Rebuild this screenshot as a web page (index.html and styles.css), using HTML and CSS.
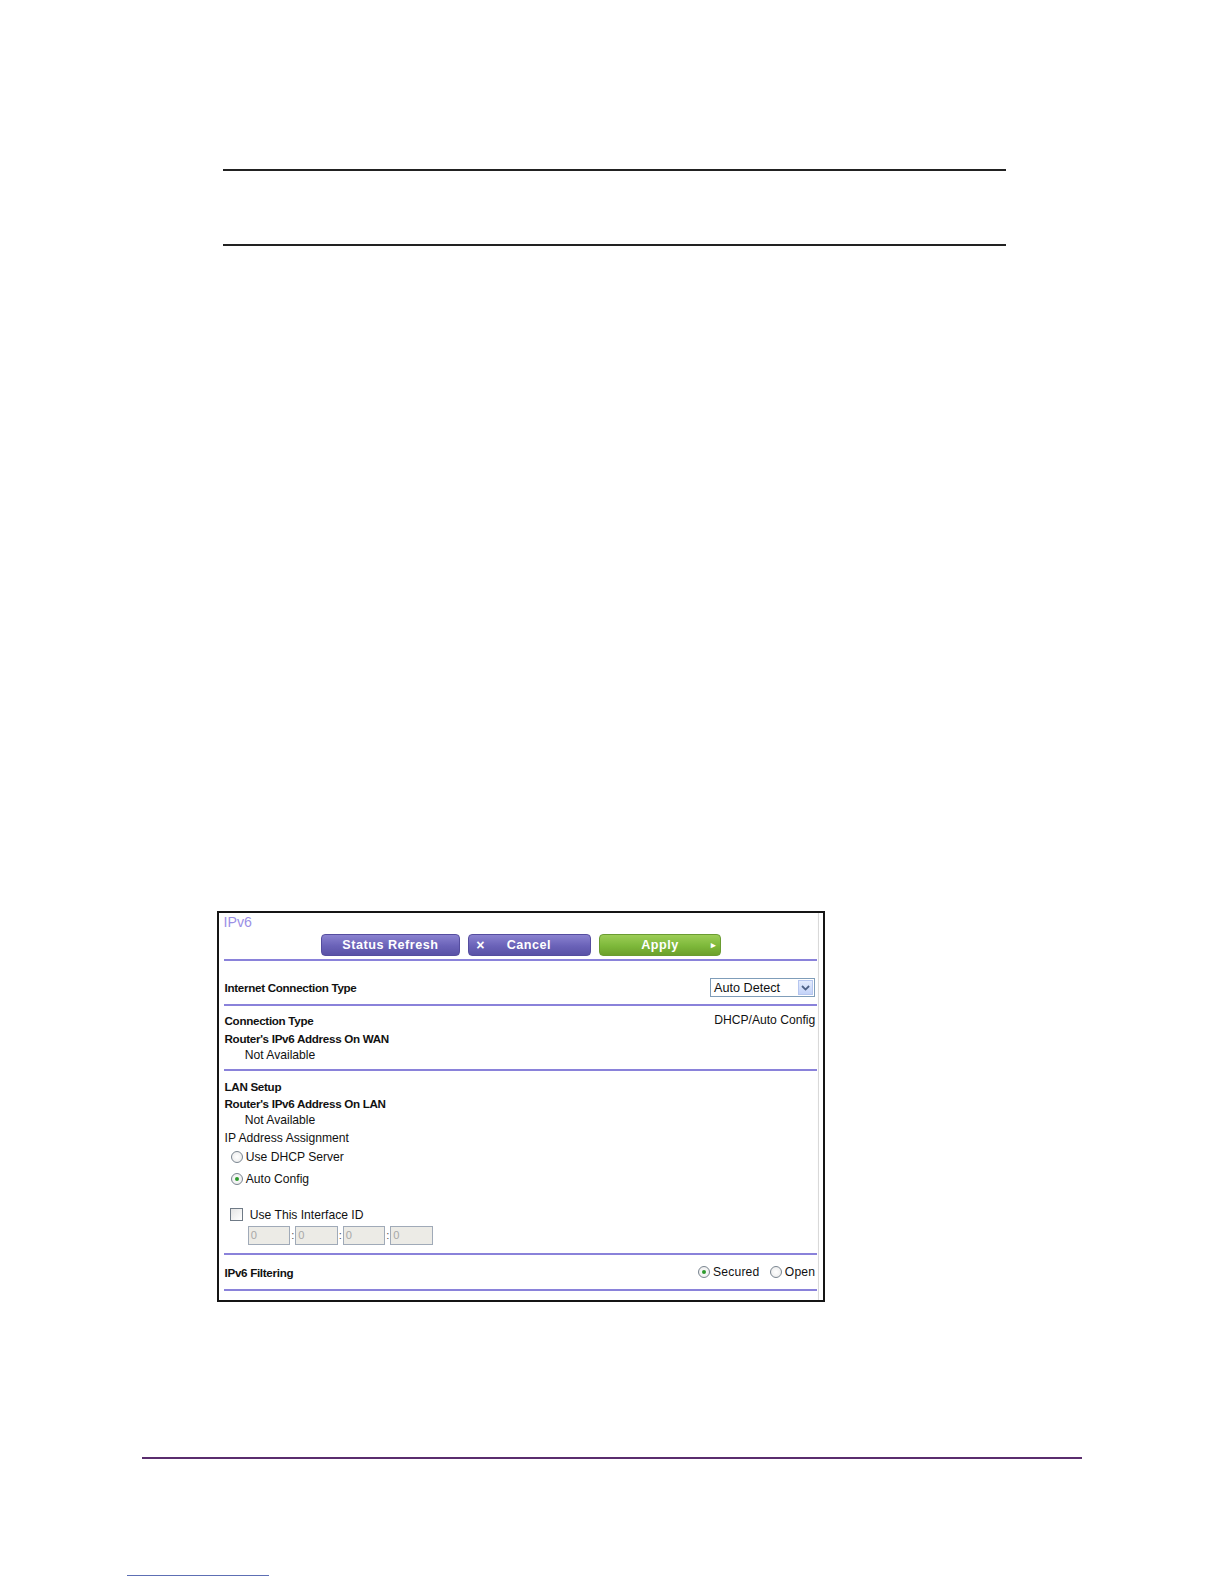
FILE: index.html
```html
<!DOCTYPE html>
<html>
<head>
<meta charset="utf-8">
<link rel="stylesheet" href="styles.css">
</head>
<body>
<div class="page">
  <div class="note-box"></div>

  <div class="panel">
    <div class="title">IPv6</div>
    <div class="btn-row">
      <span class="btn btn-purple btn-refresh">Status Refresh</span>
      <span class="btn btn-purple btn-cancel"><span class="x">×</span><span class="lbl">Cancel</span></span>
      <span class="btn btn-green btn-apply"><span class="lbl">Apply</span><span class="arr">▸</span></span>
    </div>
    <div class="hr"></div>

    <div class="sec sec-ict">
      <div class="row-between">
        <span class="b">Internet Connection Type</span>
        <span class="select"><span class="sel-text">Auto Detect</span><span class="sel-btn"><svg width="9" height="6" viewBox="0 0 9 6"><path d="M1 1 L4.5 4.5 L8 1" fill="none" stroke="#4d6185" stroke-width="1.8"/></svg></span></span>
      </div>
    </div>
    <div class="hr"></div>

    <div class="sec sec-wan">
      <div class="line row-between"><span class="b">Connection Type</span><span>DHCP/Auto Config</span></div>
      <div class="line b">Router's IPv6 Address On WAN</div>
      <div class="line ind">Not Available</div>
    </div>
    <div class="hr"></div>

    <div class="sec sec-lan">
      <div class="line b">LAN Setup</div>
      <div class="line b">Router's IPv6 Address On LAN</div>
      <div class="line ind">Not Available</div>
      <div class="line">IP Address Assignment</div>
      <div class="radio-line"><span class="radio"></span>Use DHCP Server</div>
      <div class="radio-line"><span class="radio on"></span>Auto Config</div>
      <div class="check-line"><span class="check"></span>Use This Interface ID</div>
      <div class="ids">
        <span class="inp">0</span><span class="colon">:</span><span class="inp">0</span><span class="colon">:</span><span class="inp">0</span><span class="colon">:</span><span class="inp">0</span>
      </div>
    </div>
    <div class="hr"></div>

    <div class="sec sec-filter">
      <div class="row-between">
        <span class="b">IPv6 Filtering</span>
        <span class="opts"><span class="radio on"></span><span class="opt-l">Secured</span><span class="radio"></span><span class="opt-l">Open</span></span>
      </div>
    </div>
    <div class="hr"></div>
  </div>

  <div class="footer-rule"></div>
  <div class="tiny-rule"></div>
</div>
</body>
</html>
```

FILE: styles.css
```css
html, body {
  margin: 0;
  padding: 0;
  background: #fff;
}
.page {
  zoom: 1.0115;
  padding-top: 1px;
  font-family: "Liberation Sans", Arial, sans-serif;
  color: #111;
}
.note-box {
  margin: 166px 0 0 220px;
  width: 775px;
  height: 72px;
  border-top: 2px solid #222;
  border-bottom: 2px solid #222;
}
.panel {
  margin: 658px 0 0 215px;
  width: 597px;
  height: 382px;
  border: 2px solid #151515;
  box-shadow: inset -4px 0 0 #fff, inset -5px 0 0 #d8d8d8;
  font-size: 12px;
}
.title {
  height: 16px;
  line-height: 16px;
  padding-left: 4px;
  color: #9b8fe6;
  font-size: 14px;
  margin-top: 1px;
}
.btn-row {
  display: flex;
  gap: 8px;
  margin: 4px 0 0 100px;
  height: 21px;
}
.btn {
  height: 21px;
  border-radius: 4px;
  color: #fff;
  font-weight: bold;
  font-size: 12.5px;
  letter-spacing: 0.5px;
  display: flex;
  align-items: center;
  box-sizing: border-box;
}
.btn-purple {
  background: linear-gradient(#8a82d0, #6a62b8 55%, #5a52a6);
  border: 1px solid #554d9f;
}
.btn-green {
  background: linear-gradient(#9ccd56, #7db83a 55%, #6ca02c);
  border: 1px solid #6a9c31;
}
.btn-refresh {
  width: 138px;
  justify-content: center;
}
.btn-cancel {
  width: 121px;
  padding-left: 7px;
}
.btn-cancel .x {
  font-size: 14px;
  width: 30px;
}
.btn-apply {
  width: 121px;
  padding-left: 41px;
}
.btn-apply .arr {
  margin-left: 32px;
  font-size: 9px;
}
.hr {
  height: 2px;
  background: #8a82da;
  margin: 3px 6px 0 4px;
}
.sec {
  padding-left: 5px;
  padding-right: 8px;
}
.row-between {
  display: flex;
  justify-content: space-between;
  align-items: center;
}
.b {
  font-weight: bold;
  font-size: 11.5px;
  letter-spacing: -0.3px;
}
.sec-ict {
  padding-top: 17px;
  padding-bottom: 7px;
}
.sec + .hr {
  margin-top: 0;
}
.select {
  width: 104px;
  height: 19px;
  box-sizing: border-box;
  border: 1px solid #7f9db9;
  display: flex;
  align-items: center;
  justify-content: space-between;
  font-size: 12.5px;
  color: #111;
}
.sel-text {
  padding-left: 3px;
}
.sel-btn {
  width: 15px;
  height: 15px;
  margin-right: 1px;
  background: linear-gradient(#e3ebfd, #c4d3f8);
  border: 1px solid #b6c6ef;
  box-sizing: border-box;
  display: flex;
  align-items: center;
  justify-content: center;
}
.sec-wan {
  padding-top: 6px;
  padding-bottom: 5px;
}
.line {
  height: 17px;
  line-height: 17px;
}
.ind {
  padding-left: 20px;
}
.sec-lan {
  padding-top: 7px;
  padding-bottom: 8px;
}
.radio-line {
  height: 21px;
  display: flex;
  align-items: center;
  padding-left: 6px;
}
.radio {
  width: 10px;
  height: 10px;
  border-radius: 50%;
  border: 1px solid #7a8590;
  background: radial-gradient(#fff, #e8e8e8);
  display: inline-flex;
  align-items: center;
  justify-content: center;
  margin-right: 3px;
  flex: none;
}
.radio.on::after {
  content: "";
  width: 4px;
  height: 4px;
  border-radius: 50%;
  background: #2d9a2d;
}
.check-line {
  margin-top: 16px;
  height: 18px;
  display: flex;
  align-items: center;
  padding-left: 5px;
}
.check {
  width: 11px;
  height: 11px;
  border: 1px solid #6f7a86;
  background: linear-gradient(135deg, #e4e4e4, #fff);
  margin-right: 7px;
}
.ids {
  margin-top: 2px;
  padding-left: 23px;
  display: flex;
  align-items: center;
  height: 19px;
}
.inp {
  width: 42px;
  height: 19px;
  box-sizing: border-box;
  border: 1px solid #a0aab8;
  background: #ecebe6;
  color: #a8a8a8;
  font-size: 11px;
  line-height: 17px;
  padding-left: 2px;
}
.colon {
  width: 5px;
  text-align: center;
  font-size: 11px;
  color: #555;
}
.sec-filter {
  padding-top: 8px;
  padding-bottom: 8px;
}
.sec-filter .row-between {
  height: 18px;
}
.opts {
  display: flex;
  align-items: center;
}
.opt-l {
  margin-right: 10px;
  letter-spacing: 0.2px;
}
.opt-l:last-child {
  margin-right: 0;
}
.footer-rule {
  margin: 154px 0 0 140px;
  width: 930px;
  height: 2px;
  background: #5a2d6e;
}
.tiny-rule {
  margin: 114px 0 0 126px;
  width: 140px;
  height: 1px;
  background: #5d6fb4;
}
```
